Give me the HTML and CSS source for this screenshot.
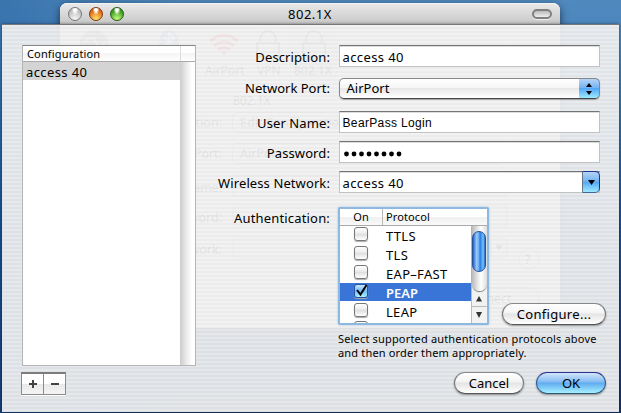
FILE: index.html
```html
<!DOCTYPE html>
<html lang="en">
<head>
<meta charset="utf-8">
<title>802.1X</title>
<link rel="stylesheet" href="styles.css">
</head>
<body>
<div class="desktop">
  <section class="window">
    <header class="titlebar">
      <div class="lights"><i class="light grey"></i><i class="light amber"></i><i class="light green"></i></div>
      <h1>802.1X</h1>
      <i class="pill"></i>
    </header>
    <svg class="backdrop" width="500" height="304" viewBox="60 24 500 304" aria-hidden="true">
      <circle cx="94" cy="44" r="14" fill="#888"/><path d="M84 42q8-8 12 0t9 0M86 50q8-6 15 2" fill="none" stroke="#eee" stroke-width="2"/>
      <path d="M131 28v46" stroke="#888" stroke-dasharray="1 3"/>
      <ellipse cx="169" cy="42" rx="10" ry="12" fill="#729bd8"/><path d="M164 37l10 9-5 5V33l5 5-10 9" fill="none" stroke="#fff" stroke-width="2"/>
      <rect x="290" y="26" width="47" height="53" fill="#ddd"/>
      <g fill="none" stroke="#ee3020" stroke-width="3"><path d="M210 41q14-11 28 0M214 46q10-8 20 0M218 50q6-5 12 0"/></g><circle cx="224" cy="53" r="2" fill="#e43"/>
      <g fill="none" stroke="#777" stroke-width="2"><rect x="257" y="43" width="22" height="14"/><path d="M260 43v-4a8 8 0 0 1 16 0v4"/><rect x="303" y="43" width="22" height="14"/><path d="M306 43v-4a8 8 0 0 1 16 0v4"/></g>
      <g class="back-text"><text class="tool" x="205" y="75">AirPort</text><text class="tool" x="257" y="75">VPN</text><text class="tool" x="294" y="75">802.1X</text><text class="tool" x="233" y="105">802.1X</text>
      <text x="222" y="127" text-anchor="end">Configuration:</text><text x="240" y="127">Edit Configurations...</text>
      <text x="222" y="158" text-anchor="end">Network Port:</text><text x="240" y="158">AirPort</text>
      <text x="222" y="192" text-anchor="end">User Name:</text><text x="222" y="222" text-anchor="end">Password:</text><text x="222" y="254" text-anchor="end">Wireless Network:</text><text x="463" y="303">Connect</text><text x="525" y="264">?</text></g>
      <g fill="none" stroke="#999"><rect x="232.500" y="112.500" width="270" height="20" rx="5"/><rect x="232.500" y="143.500" width="270" height="20" rx="5"/><path d="M233 196v-20h274v20zM233 226v-20h274v20zM233 258v-20h258v20z"/><rect x="491" y="238" width="16" height="20" rx="4"/><circle cx="529" cy="259" r="10"/><rect x="449" y="288" width="90" height="20" rx="10"/></g>
      <path d="M495 245h8l-4 5z" fill="#333"/>
    </svg>
  </section>

  <main class="sheet">
    <aside class="sidebar">
      <div class="list">
        <div class="list-head"><span>Configuration</span><i></i></div>
        <div class="list-body">
          <div class="list-items"><div class="list-row"><span class="value">access 40</span></div></div>
          <div class="track"></div>
        </div>
      </div>
      <div class="segments">
        <button aria-label="Add"><svg width="8" height="8"><path d="M0 4h8M4 0v8"/></svg></button><button aria-label="Remove"><svg width="8" height="8"><path d="M0 4h8"/></svg></button>
      </div>
    </aside>

    <div class="form">
      <div class="row desc"><label>Description:</label><div class="field"><span class="value">access 40</span></div></div>
      <div class="row port"><label>Network Port:</label><div class="popup"><span>AirPort</span><i class="cap"><svg width="20" height="20"><path d="M7 8h6L10 4zM7 12h6l-3 4z"/></svg></i></div></div>
      <div class="row user"><label>User Name:</label><div class="field plain"><span>BearPass Login</span></div></div>
      <div class="row pass"><label>Password:</label><div class="field"><svg class="dots" width="60" height="22"><g><circle cx="3.500" cy="12" r="2.400"/><circle cx="11" cy="12" r="2.400"/><circle cx="18.500" cy="12" r="2.400"/><circle cx="26" cy="12" r="2.400"/><circle cx="33.500" cy="12" r="2.400"/><circle cx="41" cy="12" r="2.400"/><circle cx="48.500" cy="12" r="2.400"/><circle cx="56" cy="12" r="2.400"/></g></svg></div></div>
      <div class="row wifi"><label>Wireless Network:</label><div class="field combo"><span class="value">access 40</span><i class="cap small"><svg width="18" height="20"><path d="M5 8h7l-3.500 5z"/></svg></i></div></div>
      <div class="row auth"><label>Authentication:</label>
        <div class="table">
          <div class="thead"><span class="on">On</span><span class="protocol">Protocol</span></div>
          <div class="tbody">
            <div class="rows">
              <div class="trow"><i class="check"></i><span>TTLS</span></div>
              <div class="trow"><i class="check"></i><span>TLS</span></div>
              <div class="trow"><i class="check"></i><span>EAP–FAST</span></div>
              <div class="trow selected"><i class="check"><svg width="16" height="16"><path d="M3 6l3.500 4.500L12.500 1"/></svg></i><span>PEAP</span></div>
              <div class="trow"><i class="check"></i><span>LEAP</span></div>
              <div class="trow"><i class="check"></i></div>
            </div>
            <div class="scroll">
              <div class="gutter"><i class="thumb"></i></div>
              <div class="arrow up"><svg width="16" height="16"><path d="M5 10.500h6L8 5z"/></svg></div>
              <div class="arrow"><svg width="16" height="16"><path d="M5 5h6l-3 6z"/></svg></div>
            </div>
          </div>
        </div>
        <button class="push configure"><span>Configure...</span></button>
      </div>
      <p class="hint"><span>Select supported authentication protocols above</span><br><span>and then order them appropriately.</span></p>
      <div class="actions"><button class="push cancel"><span>Cancel</span></button><button class="push default"><span>OK</span></button></div>
    </div>
  </main>
</div>
</body>
</html>
```
FILE: styles.css
```css
* { box-sizing: border-box; }
body { margin: 0; font: 13px "Noto Sans", "Open Sans", sans-serif; color: #000; }
button { font: inherit; color: inherit; padding: 0; }
span { white-space: nowrap; }
svg { display: block; }

.desktop {
  position: relative; width: 621px; height: 413px; overflow: hidden;
  background: linear-gradient(90deg, rgba(20,80,145,.35), transparent 30%), linear-gradient(#5089bd 0, #4c86bd 7%, #3974ad 25%, #194f91 55%, #143467 100%);
}
.window {
  position: absolute; left: 60px; top: 3px; width: 500px; height: 325px;
  background: #ededed; border-radius: 7px 7px 0 0; box-shadow: 0 3px 8px rgba(0,0,0,.6);
}
.titlebar {
  height: 21px; display: flex; align-items: center; justify-content: space-between;
  padding: 0 8px; border-radius: 7px 7px 0 0; border-top: 1px solid #f4f4f4;
  background: linear-gradient(#e8e8e8, #c8c8c8);
}
.titlebar h1 { margin: 0; font-size: 13px; font-weight: 400; line-height: 20px; letter-spacing: .5px; }
.lights { display: flex; gap: 7px; width: 63px; }
.light {
  width: 14px; height: 14px; border-radius: 50%; border: 1px solid #777;
  background: radial-gradient(ellipse at 50% 10%, #fff 0 15%, transparent 40%), radial-gradient(circle at 50% 90%, #f7f7f7, #bdbdbd 70%);
}
.amber { border-color: #843a16; background: radial-gradient(ellipse at 50% 10%, #fff 0 15%, transparent 40%), radial-gradient(circle at 50% 90%, #ffe76c, #e5761a 60%, #b14810); }
.green { border-color: #235d16; background: radial-gradient(ellipse at 50% 10%, #fff 0 15%, transparent 40%), radial-gradient(circle at 50% 90%, #c8ff80, #48a529 60%, #267b16); }
.pill { width: 20px; height: 10px; border: 2px solid #808080; border-radius: 5px; margin-left: 43px; background: linear-gradient(#bbb, #eee); box-shadow: 0 1px #eee; }
.back-text { font: 12.500px "Noto Sans", sans-serif; fill: #222; }
.tool { font-size: 12px; }

.sheet {
  position: absolute; left: 2px; top: 24px; width: 617px; height: 388px;
  display: flex; padding: 20px 12px 0 20px; border-top: 1px solid #777;
  background: repeating-linear-gradient(rgba(255,255,255,.2) 0 2px, rgba(200,200,200,.08) 2px 4px), rgba(239,239,239,.93);
  box-shadow: 0 0 3px rgba(0,0,0,.45);
}
.sidebar { width: 174px; }
.list { height: 321px; border: 1px solid #b5b5b5; border-top-color: #858585; background: #fff; display: flex; flex-direction: column; }
.list-head { display: flex; justify-content: space-between; height: 16px; padding-left: 4px; font-size: 11px; line-height: 15px; letter-spacing: .15px; border-bottom: 1px solid #aaa; background: linear-gradient(#fff 50%, #f4f4f4 50%, #fff); }
.list-head i { width: 15px; border-left: 1px solid #ddd; }
.list-body { flex: 1; display: flex; }
.list-items { flex: 1; }
.list-row { height: 18px; padding-left: 3px; line-height: 20px; background: #d4d4d4; }
.value { letter-spacing: .4px; }
.track { width: 15px; background: linear-gradient(90deg, #ccc, #ececec 45%, #fff 80%); }
.segments { display: flex; width: 45px; height: 23px; margin: 6px 0 0 -1px; border: 1px solid #8b8b8b; border-top: 2px solid #7c7c7c; box-shadow: 0 1px #fff; }
.segments button { flex: 1; display: grid; place-items: center; border: 0; background: linear-gradient(#fff 50%, #e8e8e8 50%, #f5f5f5); }
.segments button + button { border-left: 1px solid #8b8b8b; }
.segments path { stroke: #444; stroke-width: 2; }

.form { width: 411px; }
.row { display: flex; gap: 8px; height: 22px; }
.row label { width: 135px; flex: none; padding-right: 1px; text-align: right; line-height: 24px; letter-spacing: .1px; white-space: nowrap; }
.port label { line-height: 20px; letter-spacing: 0; }
.auth label { line-height: 22px; letter-spacing: .17px; }
.desc label { line-height: 25px; }
.field { width: 261px; height: 22px; background: #fff; border: 1px solid #c2c2c2; border-top: 1px solid #747474; box-shadow: inset 0 1px #ddd; padding-left: 3px; line-height: 23px; }
.plain { font: 12px/22px "Liberation Sans", Arial, sans-serif; letter-spacing: .35px; }
.port { margin-top: 11px; }
.user { margin-top: 11px; }
.pass, .wifi { margin-top: 8px; }
.row .field, .row .popup { margin-left: -.5px; }
.popup {
  display: flex; justify-content: space-between; width: 261px; height: 21px; padding-left: 7px; line-height: 19px;
  border: 1px solid #888; border-bottom-color: #444; border-radius: 5px; overflow: hidden;
  background: linear-gradient(#fff, #f5f5f5 45%, #e8e8e8 50%, #fff); box-shadow: 0 1px 1px rgba(0,0,0,.3);
}
.cap { width: 21px; height: 21px; margin: -1px -1px 0 0; border: 1px solid #1c348e; border-left: 0; border-bottom-color: #3c6694; border-radius: 0 5px 5px 0; background: linear-gradient(#b6d4f4, #75b5f5 45%, #54a7f5 50%, #9beaff); }
.combo { display: flex; justify-content: space-between; }
.small { width: 18px; height: 22px; border-left: 1px solid #678; }
.auth { margin-top: 14px; height: 118px; }
.table { width: 151px; height: 118px; flex: none; margin-left: -1px; border: 2px solid #8db8df; border-radius: 2px; box-shadow: 0 0 2px #8db8df; background: #fff; display: flex; flex-direction: column; overflow: hidden; }
.thead { height: 17px; flex: none; display: flex; font-size: 11px; line-height: 16px; border-bottom: 1px solid #aaa; background: linear-gradient(#fff 50%, #efefef 50%, #fafafa); }
.on { width: 43px; text-align: center; border-right: 1px solid #bbb; }
.protocol { padding-left: 3px; letter-spacing: .1px; }
.tbody { display: flex; flex: 1; min-height: 0; }
.rows { flex: 1; overflow: hidden; }
.trow { height: 19px; display: flex; line-height: 20px; }
.trow span { margin-left: 18px; letter-spacing: .3px; }
.check { width: 14px; height: 14px; margin: 1px 0 0 14px; border: 1px solid #777; border-radius: 3px; background: linear-gradient(#fff, #ececec 45%, #ddd 50%, #fff); box-shadow: 0 1px 1px #aaa; }
.trow:last-child .check { margin-top: 0; }
.selected { background: linear-gradient(#3875d7 18px, #fff 18px); color: #fff; font-weight: 600; }
.selected span { letter-spacing: 0; }
.selected .check { border-color: #29529f; background: linear-gradient(#cbe4fb, #74b9f5 50%, #a8f2ff); }
.check svg { margin: -1px; overflow: visible; }
.check path { fill: none; stroke: #000; stroke-width: 2; }
.scroll { width: 16px; display: flex; flex-direction: column; border-left: 1px solid #bbb; background: #f2f2f2; }
.gutter { flex: 1; padding-top: 5px; border-radius: 0 0 8px 8px; background: linear-gradient(90deg, #bbb, #fff 60%, #ddd); box-shadow: 0 1px 1px #777; }
.thumb { display: block; width: 14px; height: 41px; border: 1px solid #24519c; border-radius: 7px; background: linear-gradient(90deg, #1e62ce, #9ac9fa 30%, #66abf2 50%, #2876dc 58%, #73c3fd 85%, #2865b8); }
.arrow { height: 16px; margin-left: -1px; }
.arrow.up { border-bottom: 1px solid #bbb; }
.arrow path { fill: #333; }
.push {
  height: 22px; border: 1px solid #777; border-color: #888 #777 #555; border-radius: 11px; line-height: 19px;
  background: linear-gradient(#fff, #f4f4f4 45%, #e4e4e4 50%, #fff); box-shadow: 0 1px 2px rgba(0,0,0,.4);
}
.configure { width: 104px; flex: none; align-self: flex-start; margin: 96px 0 0 5px; letter-spacing: .3px; }
.hint { margin: 7px 0 0 142px; font-size: 11px; line-height: 14px; letter-spacing: .17px; }
.actions { display: flex; justify-content: flex-end; gap: 12px; margin: 12px 1px 0 0; }
.actions .push { width: 70px; }
.default { border-color: #29318f #315a94 #315477; background: linear-gradient(#d3e5fa, #83bbf2 45%, #5fabf0 50%, #a5f0ff); }
```
